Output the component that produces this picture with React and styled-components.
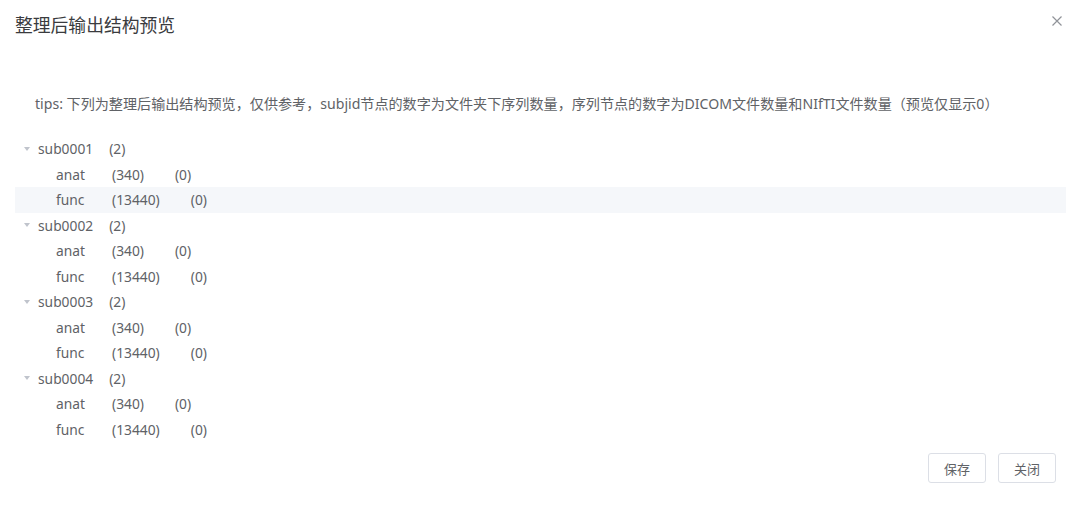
import React from "react";
import styled, { createGlobalStyle } from "styled-components";

const Global = createGlobalStyle`
  html, body { margin: 0; padding: 0; background: #fff; }
  body { font-family: "Noto Sans", "Noto Sans CJK SC", sans-serif; }
  * { box-sizing: border-box; }
`;

const Dialog = styled.div`
  width: 1080px;
  height: 510px;
  background: #fff;
  display: flex;
  flex-direction: column;
`;

const Header = styled.div`
  display: flex;
  justify-content: space-between;
  align-items: flex-start;
  padding: 13px 17px 0 15px;
`;

const Title = styled.div`
  font-size: 17.8px;
  line-height: 24px;
  color: #3a3b3e;
`;

const Close = styled.button`
  border: none;
  background: transparent;
  padding: 0;
  margin-top: 2px;
  width: 12px;
  height: 12px;
  display: flex;
  cursor: pointer;
`;

const Tips = styled.p`
  margin: 57px 0 0;
  padding-left: 35px;
  font-size: 14.1px;
  line-height: 20px;
  color: #606266;
`;

const Tree = styled.div`
  margin: 22px 14px 0 15px;
  display: flex;
  flex-direction: column;
`;

const Row = styled.div`
  height: 25.5px;
  display: flex;
  align-items: center;
  padding-left: ${(p) => p.$level * 18}px;
  background: ${(p) => (p.$active ? "#f5f7fa" : "transparent")};
  font-size: 13.8px;
  color: #606266;
`;

const Expand = styled.span`
  width: 23px;
  height: 100%;
  display: flex;
  align-items: center;
  justify-content: center;
  &::after {
    content: "";
    display: ${(p) => (p.$leaf ? "none" : "block")};
    border-left: 3.5px solid transparent;
    border-right: 3.5px solid transparent;
    border-top: 4px solid #c0c4cc;
  }
`;

const Label = styled.span`
  display: inline-block;
  ${(p) => (p.$width ? `width: ${p.$width}px;` : "margin-right: 16px;")}
  white-space: nowrap;
`;

const Count = styled.span`
  white-space: nowrap;
  & + & { margin-left: 31px; }
`;

const Footer = styled.div`
  margin-top: auto;
  display: flex;
  justify-content: flex-end;
  gap: 12px;
  padding: 0 24px 27px 0;
`;

const Button = styled.button`
  height: 30px;
  width: 58px;
  border: 1px solid #dcdfe6;
  border-radius: 3px;
  background: #fff;
  color: #606266;
  font-family: "Noto Sans CJK SC", sans-serif;
  font-size: 13px;
  padding: 0;
  cursor: pointer;
`;

const subjects = ["sub0001", "sub0002", "sub0003", "sub0004"];

export default function App() {
  return (
    <>
      <Global />
      <Dialog>
        <Header>
          <Title>整理后输出结构预览</Title>
          <Close aria-label="close">
            <svg width="12" height="12" viewBox="0 0 12 12">
              <path d="M1.5 1.5 L10.5 10.5 M10.5 1.5 L1.5 10.5" stroke="#909399" strokeWidth="1.2" fill="none" />
            </svg>
          </Close>
        </Header>
        <Tips>
          tips: 下列为整理后输出结构预览，仅供参考，subjid节点的数字为文件夹下序列数量，序列节点的数字为DICOM文件数量和NIfTI文件数量（预览仅显示0）
        </Tips>
        <Tree>
          {subjects.map((s, i) => (
            <React.Fragment key={s}>
              <Row $level={0}>
                <Expand />
                <Label>{s}</Label>
                <Count>(2)</Count>
              </Row>
              <Row $level={1}>
                <Expand $leaf />
                <Label $width={56}>anat</Label>
                <Count>(340)</Count>
                <Count>(0)</Count>
              </Row>
              <Row $level={1} $active={i === 0}>
                <Expand $leaf />
                <Label $width={56}>func</Label>
                <Count>(13440)</Count>
                <Count>(0)</Count>
              </Row>
            </React.Fragment>
          ))}
        </Tree>
        <Footer>
          <Button>保存</Button>
          <Button>关闭</Button>
        </Footer>
      </Dialog>
    </>
  );
}
